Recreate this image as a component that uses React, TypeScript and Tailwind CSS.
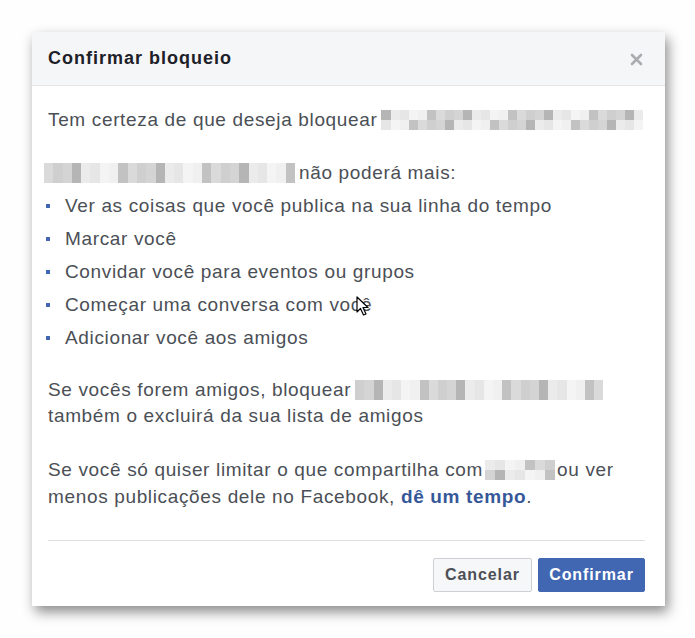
import React from "react";

const shades = ["#f0f0f0", "#e6e6e6", "#dadada", "#cfcfcf", "#c2c2c2", "#b5b5b5", "#ebebeb", "#d4d4d4", "#f4f4f4"];

function Blur({ w, seed }: { w: number; seed: number }) {
  const cols = Math.floor(w / 9);
  const cells: string[][] = [[], []];
  let s = seed;
  for (let r = 0; r < 2; r++) {
    for (let c = 0; c < cols; c++) {
      s = (s * 9301 + 49297) % 233280;
      cells[r].push(shades[s % shades.length]);
    }
  }
  return (
    <span className="inline-flex flex-col align-middle" style={{ width: w }}>
      {cells.map((row, i) => (
        <span key={i} className="flex h-[10px]">
          {row.map((c, j) => (
            <span key={j} className="h-full flex-1" style={{ background: c }} />
          ))}
        </span>
      ))}
    </span>
  );
}

const items = [
  "Ver as coisas que você publica na sua linha do tempo",
  "Marcar você",
  "Convidar você para eventos ou grupos",
  "Começar uma conversa com você",
  "Adicionar você aos amigos",
];

export default function App() {
  return (
    <div
      className="relative w-[695px] h-[638px] bg-[#fefefe] pt-[32px] pl-[32px]"
      style={{ fontFamily: '"Liberation Sans", Arial, sans-serif' }}
    >
      <div className="w-[633px] h-[574px] bg-white shadow-[3px_6px_12px_rgba(0,0,0,0.45)] flex flex-col">
        <div className="h-[54px] bg-[#f5f6f7] border-b border-[#e5e5e5] flex items-center justify-between pl-4 pr-[22px]">
          <span className="text-[18px] font-bold text-[#1d2129] tracking-[1px]">Confirmar bloqueio</span>
          <svg width="13" height="13" viewBox="0 0 13 13" className="mt-[2px]">
            <path d="M2 2 L11 11 M11 2 L2 11" stroke="#a9acb0" strokeWidth="2.6" strokeLinecap="round" />
          </svg>
        </div>
        <div className="pl-4 pr-[20px] pt-[21px] text-[19px] leading-[26px] text-[#4b4f56] tracking-[0.65px]">
          <div className="flex items-center gap-[4px]">
            Tem certeza de que deseja bloquear <Blur w={262} seed={7} />
          </div>
          <div className="mt-[27px] flex items-center gap-[4px] -ml-[4px]">
            <Blur w={251} seed={13} /> não poderá mais:
          </div>
          <ul className="mt-[3px]">
            {items.map((t) => (
              <li key={t} className="flex items-center leading-[33px]">
                <span className="w-[4px] h-[4px] bg-[#4267b2] -ml-[2px] mr-[15px]" />
                {t}
              </li>
            ))}
          </ul>
          <div className="mt-[23px]">
            <div className="flex items-center gap-[4px]">
              Se vocês forem amigos, bloquear <Blur w={248} seed={29} />
            </div>
            <div>também o excluirá da sua lista de amigos</div>
          </div>
          <div className="mt-[27px] leading-[27px]">
            <div className="flex items-center gap-[2px]">
              Se você só quiser limitar o que compartilha com <Blur w={70} seed={41} />ou ver
            </div>
            <div>
              menos publicações dele no Facebook, <span className="font-bold text-[#365899]">dê um tempo</span>.
            </div>
          </div>
        </div>
        <div className="mx-4 mr-[20px] mt-[30px] border-t border-[#dddfe2]" />
        <div className="flex justify-end gap-[6px] pr-[20px] mt-[17px]">
          <button className="h-[34px] w-[99px] rounded-[2px] border border-[#ced0d4] bg-[#f6f7f9] text-[16px] font-bold tracking-[0.9px] text-[#4b4f56]">
            Cancelar
          </button>
          <button className="h-[34px] w-[107px] rounded-[2px] border border-[#4267b2] bg-[#4267b2] text-[16px] font-bold tracking-[0.9px] text-white">
            Confirmar
          </button>
        </div>
      </div>
      <svg className="absolute left-[356px] top-[296px]" width="16" height="22" viewBox="0 0 16 22">
        <path d="M1 1 L1 16 L4.5 12.5 L7.5 19 L10 18 L7 11.5 L12 11.5 Z" fill="#fff" stroke="#000" strokeWidth="1.2" strokeLinejoin="round" />
      </svg>
    </div>
  );
}
